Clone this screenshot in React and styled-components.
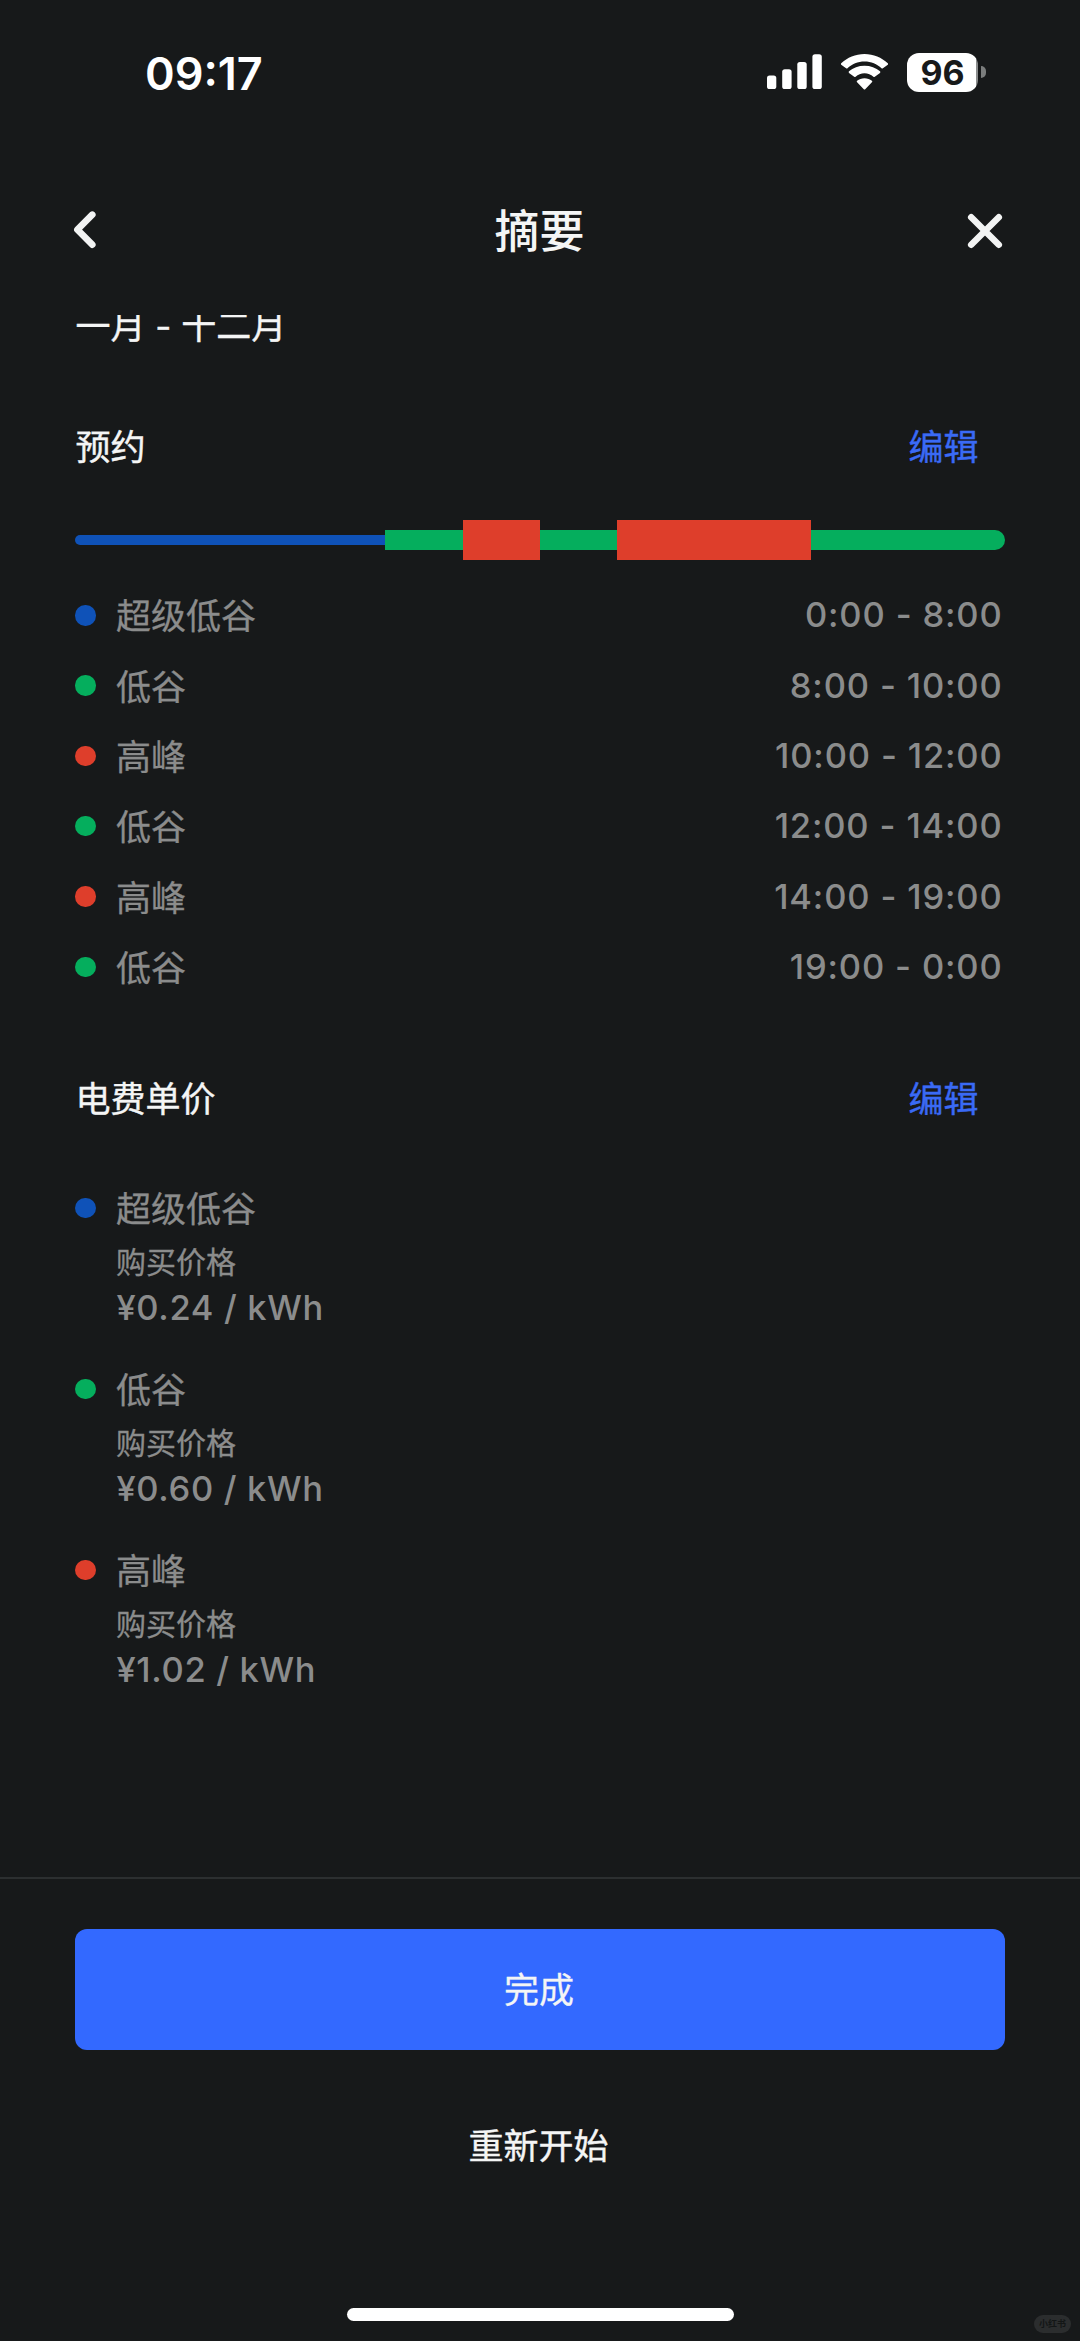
import React from "react";
import styled, { createGlobalStyle } from "styled-components";

const COLORS = {
  superOffPeak: "#0f52b8",
  offPeak: "#05ae5d",
  peak: "#de3e2b",
};

const THICKNESS = {
  superOffPeak: 10,
  offPeak: 20,
  peak: 40,
};

const LABELS = {
  superOffPeak: "超级低谷",
  offPeak: "低谷",
  peak: "高峰",
};

const schedule = [
  { type: "superOffPeak", hours: 8, time: "0:00 - 8:00" },
  { type: "offPeak", hours: 2, time: "8:00 - 10:00" },
  { type: "peak", hours: 2, time: "10:00 - 12:00" },
  { type: "offPeak", hours: 2, time: "12:00 - 14:00" },
  { type: "peak", hours: 5, time: "14:00 - 19:00" },
  { type: "offPeak", hours: 5, time: "19:00 - 0:00" },
];

const prices = [
  { type: "superOffPeak", price: "¥0.24 / kWh" },
  { type: "offPeak", price: "¥0.60 / kWh" },
  { type: "peak", price: "¥1.02 / kWh" },
];

const SignalIcon = () => (
  <svg width="55" height="36" viewBox="0 0 55 36" fill="#fff">
    <rect x="0" y="21.5" width="9.3" height="13.5" rx="2.6" />
    <rect x="15.2" y="15.2" width="9.4" height="19.8" rx="2.6" />
    <rect x="30.3" y="8" width="9.4" height="27" rx="2.6" />
    <rect x="45.4" y="0.2" width="9.4" height="34.8" rx="2.6" />
  </svg>
);

const WifiIcon = () => (
  <svg width="49" height="36" viewBox="0 0 49 36" fill="#fff">
    <path d="M24.5 7.4c6.6 0 12.6 2.6 17 6.800.4.4 1 .4 1.400 0l4.900-3.400c.5-.5.5-1.100 0-1.600C41.700 3.600 33.500 0 24.500 0S7.300 3.600 1.200 9.200c-.5.5-.5 1.100 0 1.600l4.900 3.400c.4.4 1 .4 1.400 0 4.400-4.200 10.400-6.800 17-6.800z" />
    <path d="M24.500 19.200c3.400 0 6.500 1.300 8.900 3.600.4.4 1 .4 1.400 0l5.200-3.900c.5-.5.5-1.100 0-1.600-4-3.500-9.600-5.500-15.500-5.500S13 13.800 9 17.300c-.5.5-.5 1.100 0 1.600l5.200 3.900c.4.4 1 .4 1.400 0 2.400-2.300 5.500-3.600 8.900-3.600z" />
    <path d="M31.900 28.200c.5-.5.5-1.100 0-1.500-2-1.600-4.500-2.500-7.400-2.500s-5.400.9-7.400 2.500c-.5.400-.5 1 0 1.500l6.700 7c.4.4 1 .4 1.400 0z" />
  </svg>
);

const BackIcon = () => (
  <svg
    width="27"
    height="40"
    viewBox="0 0 27 40"
    fill="none"
    stroke="#f2f3f3"
    strokeWidth="6.600"
    strokeLinecap="round"
    strokeLinejoin="round"
  >
    <path d="M20.300 3.700 5.400 18.700l14.900 15" />
  </svg>
);

const CloseIcon = () => (
  <svg
    width="40"
    height="40"
    viewBox="0 0 40 40"
    fill="none"
    stroke="#f2f3f3"
    strokeWidth="6.500"
    strokeLinecap="round"
  >
    <path d="M6.200 6.200l27.600 27.600M33.800 6.200 6.200 33.800" />
  </svg>
);

const StatusBar = () => (
  <StatusWrapper>
    <Clock>09:17</Clock>
    <StatusIcons>
      <SignalIcon />
      <WifiIcon />
      <Battery>
        <BatteryBody>96</BatteryBody>
        <BatteryCap />
      </Battery>
    </StatusIcons>
  </StatusWrapper>
);

const Header = () => (
  <HeaderWrapper>
    <IconButton aria-label="返回">
      <BackIcon />
    </IconButton>
    <Title>摘要</Title>
    <IconButton aria-label="关闭">
      <CloseIcon />
    </IconButton>
  </HeaderWrapper>
);

const App = () => {
  return (
    <>
      <GlobalStyle />
      <Screen>
        <StatusBar />
        <Header />
        <Content>
          <Months>一月 - 十二月</Months>

          <SectionHeader>
            <H2>预约</H2>
            <EditButton>编辑</EditButton>
          </SectionHeader>
          <Timeline>
            {schedule.map(({ type, hours, time }) => (
              <Segment key={time} $type={type} $hours={hours} />
            ))}
          </Timeline>
          <Schedule>
            {schedule.map(({ type, time }) => (
              <ScheduleRow key={time}>
                <Dot $type={type} />
                <Name>{LABELS[type]}</Name>
                <Time>{time}</Time>
              </ScheduleRow>
            ))}
          </Schedule>

          <SectionHeader>
            <H2>电费单价</H2>
            <EditButton>编辑</EditButton>
          </SectionHeader>
          <Prices>
            {prices.map(({ type, price }) => (
              <PriceItem key={type}>
                <PriceHead>
                  <Dot $type={type} />
                  <Name>{LABELS[type]}</Name>
                </PriceHead>
                <PriceLabel>购买价格</PriceLabel>
                <Price>{price}</Price>
              </PriceItem>
            ))}
          </Prices>
        </Content>
        <Footer>
          <DoneButton>完成</DoneButton>
          <RestartButton>重新开始</RestartButton>
          <HomeIndicator />
        </Footer>
        <Watermark>小红书</Watermark>
      </Screen>
    </>
  );
};

const GlobalStyle = createGlobalStyle`
  *,
  *::before,
  *::after {
    box-sizing: border-box;
  }

  body {
    margin: 0;
    background: #17191a;
  }

  button {
    margin: 0;
    padding: 0;
    border: none;
    background: none;
    color: inherit;
    font: inherit;
  }
`;

const Screen = styled.div`
  position: relative;
  display: flex;
  flex-direction: column;
  width: 1080px;
  height: 2341px;
  overflow: hidden;
  background: #17191a;
  color: #f4f5f5;
  font-family: "Inter", "Noto Sans CJK SC", sans-serif;
  font-size: 35px;
  line-height: 48px;
`;

const StatusWrapper = styled.div`
  display: flex;
  justify-content: space-between;
  height: 146px;
  padding: 50px 94px 0 145px;
`;

const Clock = styled.div`
  color: #fff;
  font-size: 45px;
  font-weight: 600;
`;

const StatusIcons = styled.div`
  display: flex;
  align-items: center;
  height: 44px;
  gap: 18px;
`;

const Battery = styled.div`
  display: flex;
  align-items: center;
  gap: 3px;
`;

const BatteryBody = styled.div`
  width: 71px;
  height: 39px;
  border-radius: 12px;
  background: linear-gradient(to right, #fff 68.5px, #8b8d8d 68.5px);
  color: #17191a;
  font-size: 34px;
  font-weight: 700;
  line-height: 39px;
  text-align: center;
`;

const BatteryCap = styled.div`
  width: 5px;
  height: 12px;
  border-radius: 0 6px 6px 0;
  background: #7b7d7d;
`;

const HeaderWrapper = styled.header`
  display: flex;
  align-items: center;
  justify-content: space-between;
  height: 169px;
  padding: 0 75px 0 72px;
`;

const IconButton = styled.button`
  display: flex;
  width: 40px;
  height: 40px;
`;

const Title = styled.h1`
  margin: 0;
  padding: 2px 0 0 2px;
  font-size: 45px;
  font-weight: 500;
  line-height: 64px;
`;

const Content = styled.main`
  height: 1562px;
  padding: 0 75.4px;
  overflow: hidden;
`;

/* scrolled a little way under the header */
const Months = styled.div`
  margin-top: -13.500px;
  -webkit-text-stroke: 0.4px currentColor;
`;

const SectionHeader = styled.div`
  display: flex;
  align-items: center;
  justify-content: space-between;
  margin-top: 73px;
  padding-right: 26px;
`;

const H2 = styled.h2`
  margin: 0;
  font-size: 35px;
  font-weight: 400;
  -webkit-text-stroke: 0.4px currentColor;
`;

const EditButton = styled.button`
  color: #3a6af5;
  -webkit-text-stroke: 0.4px currentColor;
`;

const Timeline = styled.div`
  display: flex;
  align-items: center;
  height: 40px;
  margin-top: 49.500px;
`;

const Segment = styled.div`
  flex: ${(props) => props.$hours} 0 0;
  height: ${(props) => THICKNESS[props.$type]}px;
  background: ${(props) => COLORS[props.$type]};

  &:first-child {
    border-radius: 5px 0 0 5px;
  }

  &:last-child {
    border-radius: 0 10px 10px 0;
  }
`;

const Schedule = styled.div`
  margin-top: 20.200px;
  color: #8b8c8c;
`;

const ScheduleRow = styled.div`
  display: flex;
  align-items: center;
  height: 70.300px;
`;

const Dot = styled.span`
  flex: none;
  width: 20.500px;
  height: 20.500px;
  margin-right: 20px;
  border-radius: 50%;
  background: ${(props) => COLORS[props.$type]};
`;

const Name = styled.span`
  flex: 1;
  padding-top: 2px;
  -webkit-text-stroke: 0.3px currentColor;
`;

const Time = styled.span`
  padding-right: 2px;
  font-size: 34.500px;
  font-weight: 500;
  letter-spacing: 0.850px;
`;

const Prices = styled.div`
  display: flex;
  flex-direction: column;
  gap: 34px;
  margin-top: 60px;
  color: #8b8c8c;
`;

const PriceItem = styled.div`
  height: 147px;
`;

const PriceHead = styled.div`
  display: flex;
  align-items: center;
`;

const PriceLabel = styled.div`
  margin-top: 7.500px;
  padding-left: 40.500px;
  font-size: 30px;
  line-height: 44px;
  -webkit-text-stroke: 0.3px currentColor;
`;

const Price = styled.div`
  padding-left: 41px;
  font-size: 34.500px;
  font-weight: 500;
  letter-spacing: 0.680px;
`;

const Footer = styled.footer`
  display: flex;
  flex: 1;
  flex-direction: column;
  align-items: center;
  padding: 50px 75.400px 20px;
  border-top: 2px solid #2c2f30;
`;

const DoneButton = styled.button`
  width: 100%;
  height: 120.500px;
  padding: 2px 2px 0 0;
  border-radius: 12px;
  background: #3369ff;
  -webkit-text-stroke: 0.3px currentColor;
`;

const RestartButton = styled.button`
  margin-top: 72.500px;
  padding-right: 3px;
  -webkit-text-stroke: 0.4px currentColor;
`;

const HomeIndicator = styled.div`
  width: 387px;
  height: 13px;
  margin-top: auto;
  border-radius: 7px;
  background: #fff;
`;

const Watermark = styled.div`
  position: absolute;
  right: 9px;
  bottom: 8px;
  width: 37px;
  height: 18px;
  border-radius: 9px;
  background: #2b2d2e;
  color: #131616;
  font-size: 9px;
  font-weight: 700;
  line-height: 18px;
  text-align: center;
`;

export default App;
